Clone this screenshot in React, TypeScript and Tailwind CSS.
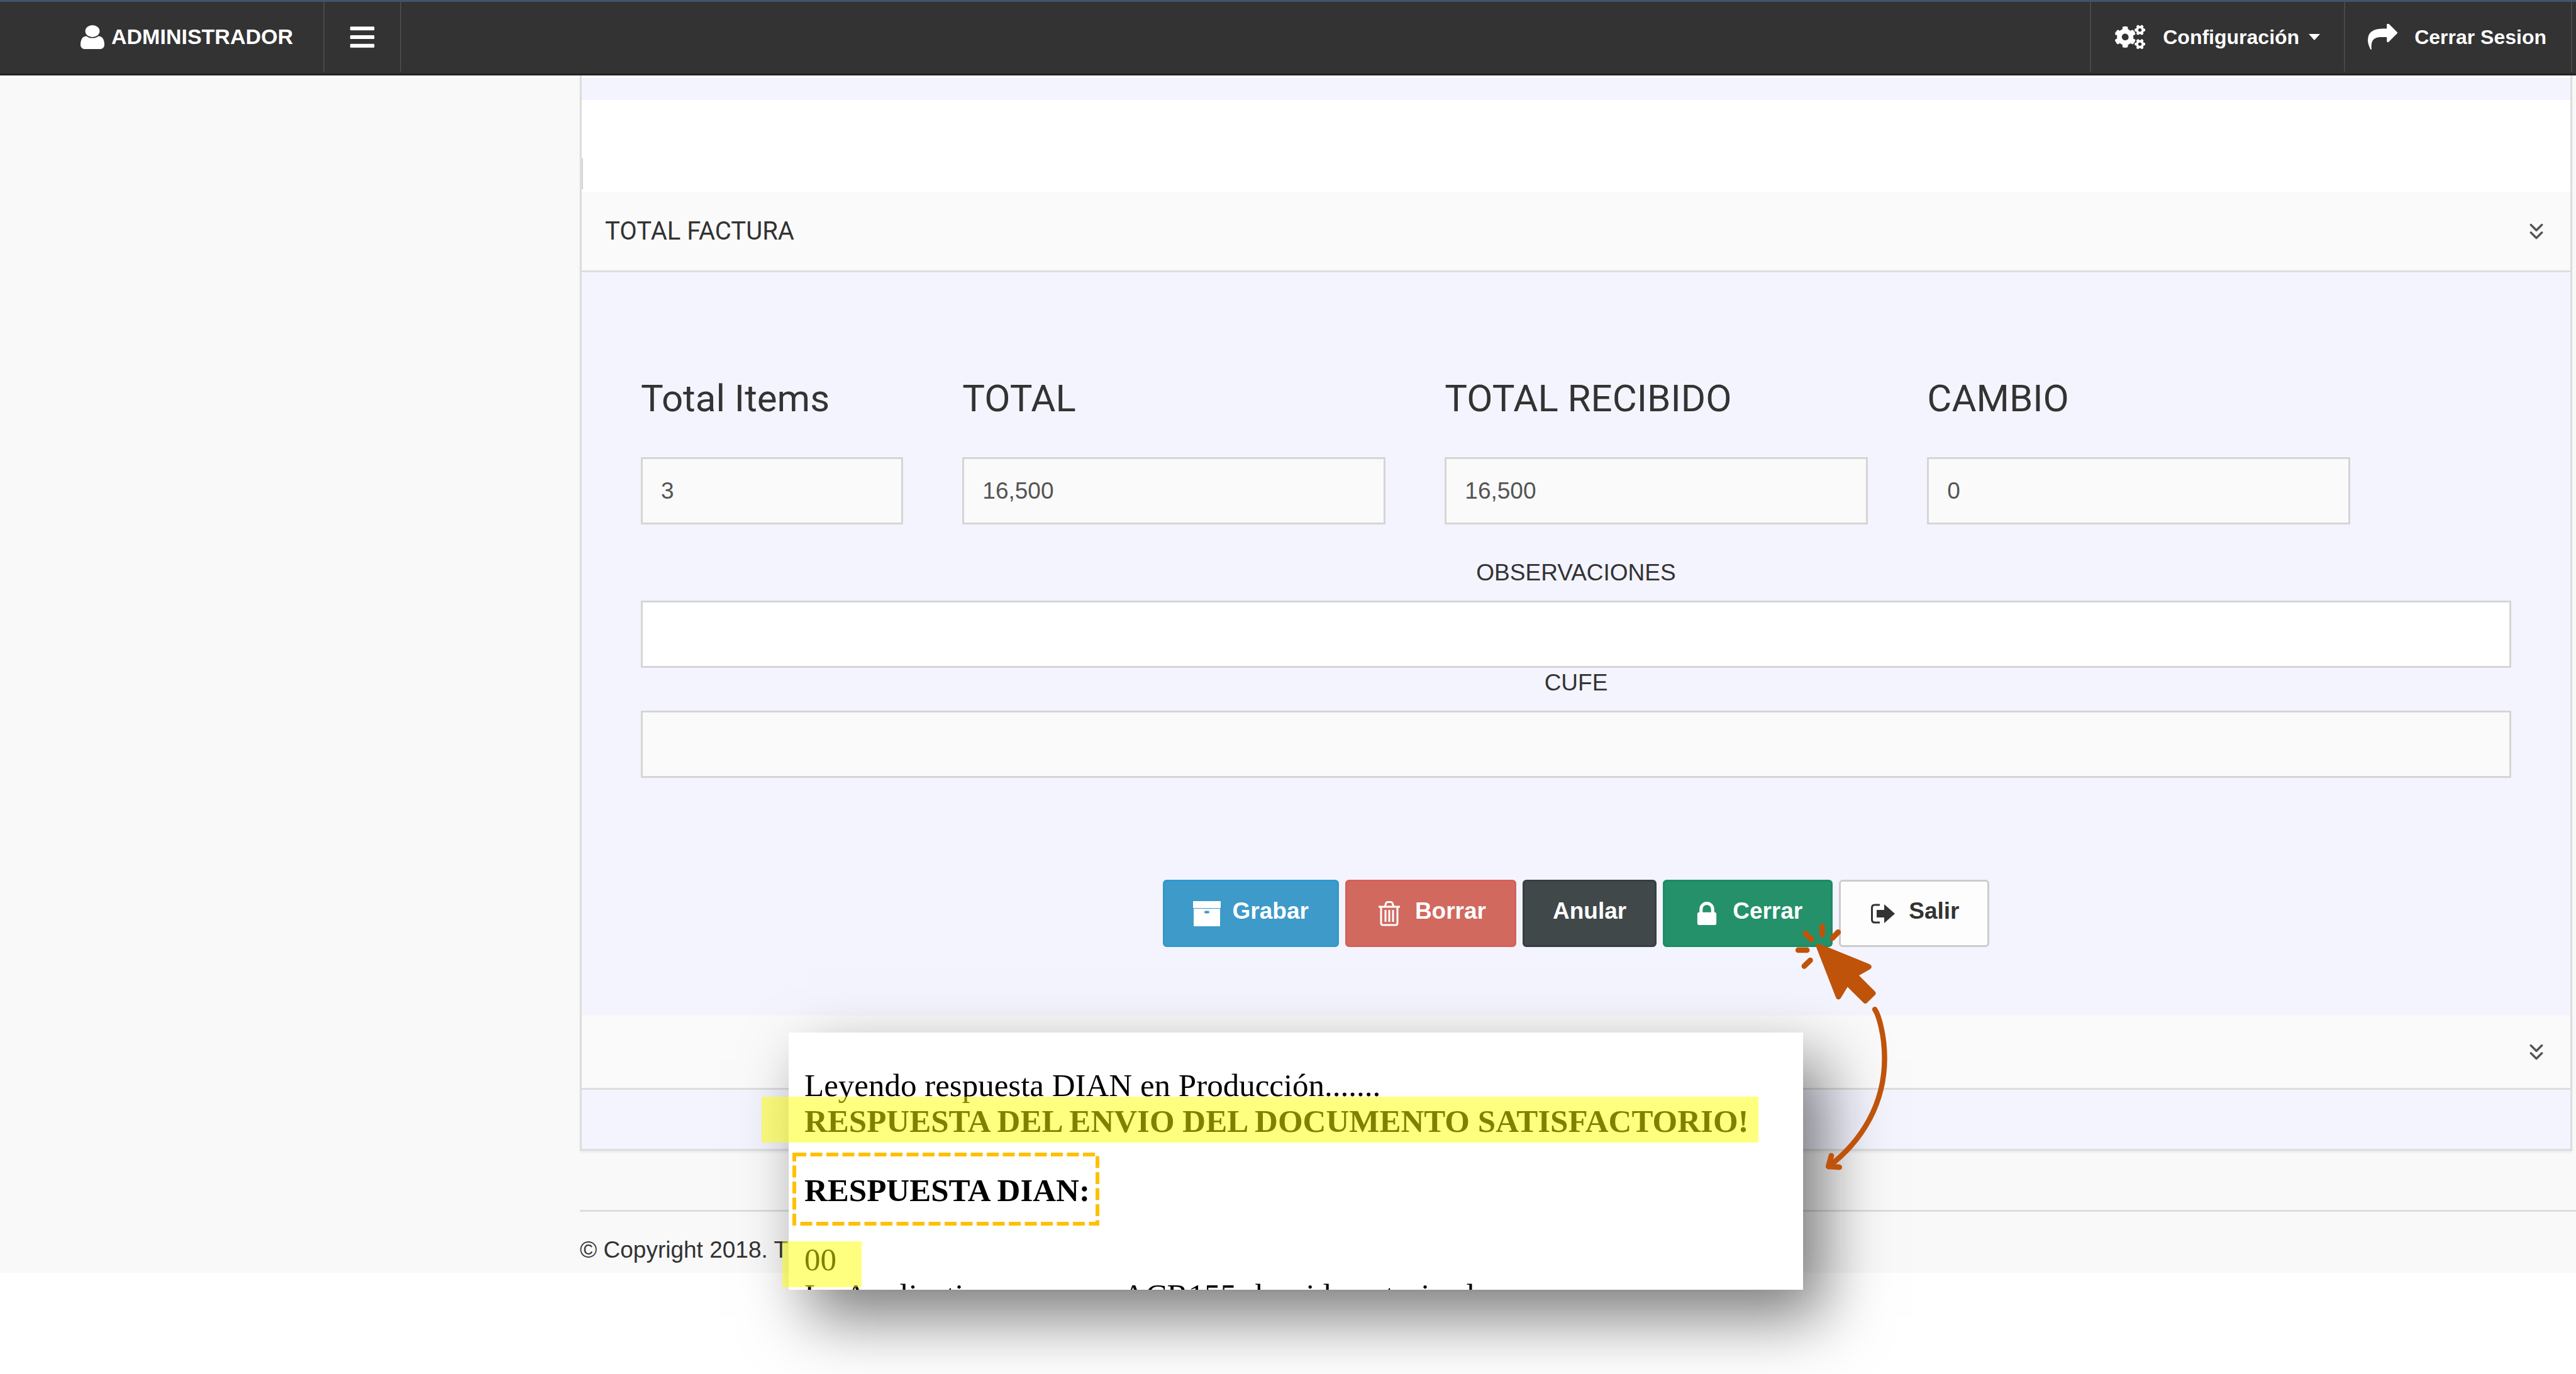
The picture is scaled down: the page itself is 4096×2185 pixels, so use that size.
import React from "react";
import { FaCogs, FaBars } from "react-icons/fa";
import { ChevronsDown } from "lucide-react";

function UserIcon() {
  return (
    <svg viewBox="256 128 1280 1536" className="h-[38px] w-[38px]" fill="currentColor" preserveAspectRatio="none" aria-hidden="true">
      <path d="M1536 1399q0 109-62.5 187t-150.5 78h-854q-88 0-150.5-78t-62.5-187q0-85 8.5-160.5t31.5-152 58.5-131 94-89 134.5-34.5q131 128 313 128t313-128q76 0 134.5 34.5t94 89 58.5 131 31.5 152 8.5 160.5zm-256-887q0 159-112.5 271.5t-271.5 112.5-271.5-112.5-112.5-271.5 112.5-271.5 271.5-112.5 271.5 112.5 112.5 271.5z" />
    </svg>
  );
}

function ShareIcon() {
  return (
    <svg viewBox="0 100 1792 1600" className="h-[42px] w-[47px]" fill="currentColor" aria-hidden="true">
      <path d="M1792 640q0 26-19 45l-512 512q-19 19-45 19t-45-19-19-45v-256h-224q-98 0-175.5 6t-154 21.5-133 42.5-105.5 69.5-80 101-48.5 138.5-17.5 181q0 55 5 123 0 6 2.5 23.5t2.5 26.5q0 15-8.5 25t-23.5 10q-16 0-28-17-7-9-13-22t-13.5-30-10.5-24q-127-285-127-451 0-199 53-333 162-403 875-403h224v-256q0-26 19-45t45-19 45 19l512 512q19 19 19 45z" />
    </svg>
  );
}

function ArchiveIcon() {
  return (
    <svg viewBox="0 0 44 40" className="h-[40px] w-[44px]" fill="currentColor" aria-hidden="true">
      <path d="M0 0h44v11H0z" />
      <path fillRule="evenodd" d="M1 12h42v28H1zM18 17.500q0 2 2 2h4q2 0 2-2t-2-2h-4q-2 0-2 2z" />
    </svg>
  );
}

function TrashIcon() {
  return (
    <svg viewBox="0 0 44 40" className="h-[40px] w-[44px]" fill="none" stroke="currentColor" strokeWidth="3" aria-hidden="true">
      <path d="M5 9h34" />
      <path d="M15 9l2-6q.5-1.500 2-1.500h6q1.500 0 2 1.500l2 6" />
      <path d="M9 9v26q0 3 3 3h20q3 0 3-3V9" />
      <path d="M16 14v19M22 14v19M28 14v19" />
    </svg>
  );
}

function LockIcon() {
  return (
    <svg viewBox="320 128 1152 1408" className="h-[37px] w-[44px]" fill="currentColor" aria-hidden="true">
      <path d="M640 768h512v-192q0-106-75-181t-181-75-181 75-75 181v192zm832 96v576q0 40-28 68t-68 28h-960q-40 0-68-28t-28-68v-576q0-40 28-68t68-28h32v-192q0-184 132-316t316-132 316 132 132 316v192h32q40 0 68 28t28 68z" />
    </svg>
  );
}

function ExitIcon() {
  return (
    <svg viewBox="0 0 44 36" className="h-[36px] w-[44px]" aria-hidden="true">
      <path d="M17 4H9q-4.500 0-4.500 4.500v19q0 4.500 4.500 4.500h8" fill="none" stroke="currentColor" strokeWidth="3" />
      <path d="M12 12h12V3l17 15-17 15v-9H12z" fill="currentColor" />
    </svg>
  );
}

const totals = [
  { id: "items", label: "Total Items", value: "3", span: "col-span-2" },
  { id: "total", label: "TOTAL", value: "16,500", span: "col-span-3" },
  { id: "recibido", label: "TOTAL RECIBIDO", value: "16,500", span: "col-span-3" },
  { id: "cambio", label: "CAMBIO", value: "0", span: "col-span-3" },
];

const actions = [
  { label: "Grabar", icon: <ArchiveIcon />, tone: "border-[#3398cc] bg-[#3d9ac9] text-white" },
  { label: "Borrar", icon: <TrashIcon />, tone: "border-[#d3625a] bg-[#d1695f] text-white" },
  { label: "Anular", icon: null, tone: "border-[#373e42] bg-[#414849] text-white" },
  { label: "Cerrar", icon: <LockIcon />, tone: "border-[#1a8d62] bg-[#24916a] text-white" },
  { label: "Salir", icon: <ExitIcon />, tone: "border-[#cccccc] bg-[#fdfdfd] text-[#333333]" },
];

const field =
  "block h-[107px] w-full rounded-none border-[3px] border-[#d5d5d5] px-[29px] text-[37px] text-[#555555] outline-none";
const heading = "font-[Roboto,sans-serif]";

function Navbar() {
  return (
    <header className="flex h-[120px] items-stretch justify-between border-t-[3px] border-b-[3px] border-t-[#43536a] border-b-[#222222] bg-[#333333] font-bold text-white">
      <div className="mb-[3px] flex">
        <a href="#administrador" className="flex items-center gap-[11px] border-r-2 border-[#484848] pr-[48px] pl-[128px] text-[34px]">
          <UserIcon />
          ADMINISTRADOR
        </a>
        <button type="button" aria-label="Menú" className="flex w-[122px] items-center justify-center border-r-2 border-[#484848]">
          <FaBars className="size-[44px]" />
        </button>
      </div>
      <nav className="mb-[3px] flex text-[32px]">
        <button type="button" className="flex items-center border-l-2 border-[#484848] pr-[38px] pl-[38px]">
          <FaCogs className="mr-[28px] size-[48px]" />
          Configuración
          <svg viewBox="0 0 18 10" className="ml-[15px] h-[10px] w-[18px]" fill="currentColor" aria-hidden="true">
            <path d="M0 0h18L9 10z" />
          </svg>
        </button>
        <a href="#salir" className="mr-[6px] flex items-center gap-[27px] border-x-2 border-[#484848] pr-[39px] pl-[36px]">
          <ShareIcon />
          Cerrar Sesion
        </a>
      </nav>
    </header>
  );
}

function ResponseWindow() {
  return (
    <section className="absolute top-[1642px] left-[1254px] h-[409px] w-[1613px] bg-white font-['Liberation_Serif',serif] text-[51px] leading-[57px] text-black shadow-[32px_44px_96px_rgba(0,0,0,0.52)]">
      <div className="h-full overflow-hidden pt-[56px] pl-[25px] whitespace-nowrap">
        <p>Leyendo respuesta DIAN en Producción.......</p>
        <p className="font-bold">RESPUESTA DEL ENVIO DEL DOCUMENTO SATISFACTORIO!</p>
        <h2 className="mt-[53px] font-bold">RESPUESTA DIAN:</h2>
        <p className="mt-[53px]">00</p>
        <p>La Application response ACR155- ha sido autorizada</p>
      </div>
      <div className="absolute top-[102px] left-[-43px] h-[73px] w-[1585px] bg-[#ffff00]/50" />
      <div className="absolute top-[332px] left-[-10px] h-[73px] w-[126px] bg-[#ffff00]/50" />
      <svg viewBox="0 0 488 116" className="absolute top-[191px] left-[6px] h-[116px] w-[488px]" fill="none" aria-hidden="true">
        <rect x="3" y="3" width="482" height="110" stroke="#ffc000" strokeWidth="6" strokeDasharray="19 6.500" />
      </svg>
    </section>
  );
}

function ClickPointer() {
  return (
    <svg viewBox="0 0 780 1380" className="pointer-events-none absolute top-[1452px] left-[2830px] h-[428px] w-[242px]" fill="none" stroke="#bf530a" strokeLinecap="round" strokeLinejoin="round" aria-hidden="true">
      <path stroke="none" fill="#bf530a" d="M188 178Q180 154 204 158L458 261Q480 272 463 288L406 320L489 403Q495 411 489 419L446 461Q438 468 430 461L347 379L312 437Q301 450 289 437Z" />
      <path strokeWidth="28" d="M217 68V111M131 104L162 135M299 98L269 129M94 190H139M156 242L125 272" />
      <path strokeWidth="27" d="M487 494C505 520 537 620 537 745C537 980 420 1170 250 1300" />
      <path strokeWidth="28" d="M264 1244L249 1299L305 1303" />
    </svg>
  );
}

export default function App() {
  return (
    <div className="relative min-h-screen overflow-hidden bg-white font-['Liberation_Sans',Arial,sans-serif] text-[37px] text-[#333333]">
      <Navbar />
      <div className="flex bg-[#f9f9f9]">
        <aside className="w-[922px] shrink-0 border-t-[4px] border-white" />
        <main className="min-w-0 flex-1">
          <div className="mr-[6px] border-x-[3px] border-b-[3px] border-[#dddddd] bg-[#f4f4ff] shadow-[0_3px_3px_rgba(0,0,0,0.06)]">
            <div className="h-[39px] border-t-[4px] border-white" />
            <div className="flex h-[146px] items-end bg-white pb-[4px]">
              <div className="h-[49px] w-[2px] bg-[#d5d5d5]" />
            </div>
            <div className="flex h-[128px] items-center justify-between border-b-[3px] border-[#dddddd] bg-[#fafafa] pr-[33px] pl-[37px]">
              <h2 className={`${heading} text-[40px]`}>TOTAL FACTURA</h2>
              <button type="button" aria-label="Contraer total factura" className="text-[#555555]">
                <ChevronsDown className="size-[42px]" strokeWidth={2} />
              </button>
            </div>

            <form className="px-[94px] pt-[161px] pb-[109px]" onSubmit={(e) => e.preventDefault()}>
              <div className="grid grid-cols-12 gap-x-[94px]">
                {totals.map((t) => (
                  <div key={t.id} className={t.span}>
                    <label htmlFor={t.id} className={`${heading} mb-[53px] block text-[60px] leading-[80px] whitespace-nowrap`}>
                      {t.label}
                    </label>
                    <input id={t.id} readOnly value={t.value} className={`${field} bg-[#fafafa]`} />
                  </div>
                ))}
              </div>
              <label htmlFor="observaciones" className="mt-[53px] mb-[20px] block text-center leading-[48px]">
                OBSERVACIONES
              </label>
              <input id="observaciones" defaultValue="" className={`${field} bg-white`} />
              <label htmlFor="cufe" className="mb-[20px] block text-center leading-[48px]">
                CUFE
              </label>
              <input id="cufe" readOnly value="" className={`${field} bg-[#fafafa]`} />

              <div className="mt-[162px] flex justify-center gap-[10px]">
                {actions.map((a) => (
                  <button
                    key={a.label}
                    type="button"
                    className={`flex h-[107px] items-center gap-[19px] rounded-[6px] border-[3px] px-[45px] pb-[8px] font-bold ${a.tone}`}
                  >
                    {a.icon && <span className="mt-[8px]">{a.icon}</span>}
                    {a.label}
                  </button>
                ))}
              </div>
            </form>

            <div className="flex h-[118px] items-center justify-end border-b-[3px] border-[#dddddd] bg-[#fafafa] pr-[33px]">
              <button type="button" aria-label="Contraer panel" className="text-[#555555]">
                <ChevronsDown className="size-[42px]" strokeWidth={2} />
              </button>
            </div>
            <div className="h-[94px]" />
          </div>
          <footer className="mt-[94px] border-t-[3px] border-[#dddddd] pt-[37px] pb-[12px] leading-[48px]">
            © Copyright 2018. T
          </footer>
        </main>
      </div>
      <ResponseWindow />
      <ClickPointer />
    </div>
  );
}
